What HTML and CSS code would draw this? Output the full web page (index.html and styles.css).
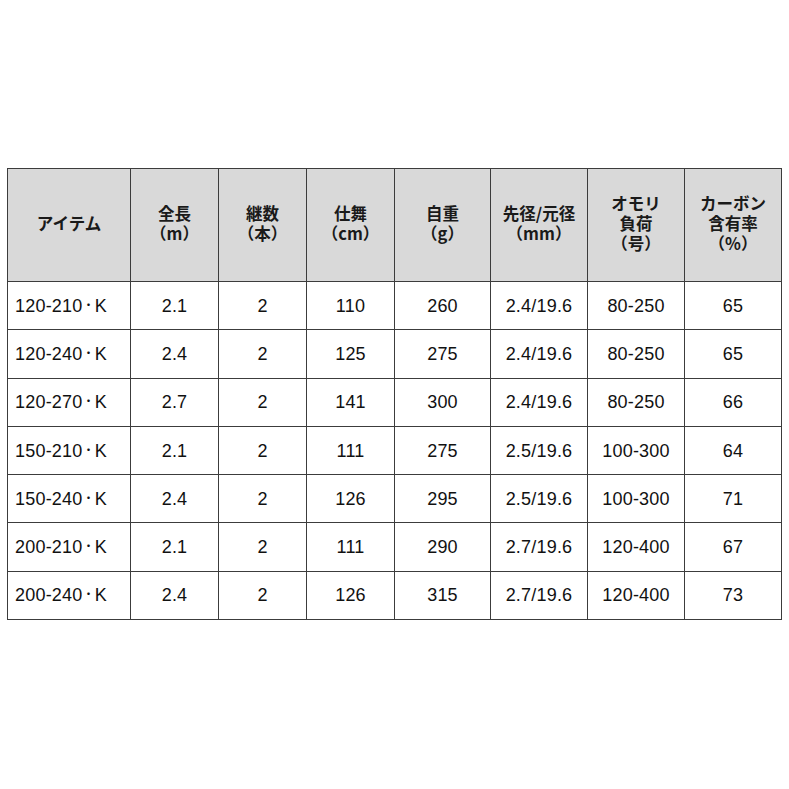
FILE: index.html
```html
<!DOCTYPE html>
<html lang="ja">
<head>
<meta charset="utf-8">
<link rel="stylesheet" href="styles.css">
</head>
<body>
<div class="page">
<table class="spec">
  <colgroup>
    <col class="c1"><col class="c2"><col class="c3"><col class="c4"><col class="c5"><col class="c6"><col class="c7"><col class="c8">
  </colgroup>
  <thead>
    <tr>
      <th>アイテム</th>
      <th>全長<br>（m）</th>
      <th>継数<br>（本）</th>
      <th>仕舞<br>（cm）</th>
      <th>自重<br>（g）</th>
      <th>先径/元径<br>（mm）</th>
      <th>オモリ<br>負荷<br>（号）</th>
      <th>カーボン<br>含有率<br>（%）</th>
    </tr>
  </thead>
  <tbody>
    <tr><td class="name">120-210<span class="dot">・</span>K</td><td>2.1</td><td>2</td><td>110</td><td>260</td><td>2.4/19.6</td><td>80-250</td><td>65</td></tr>
    <tr><td class="name">120-240<span class="dot">・</span>K</td><td>2.4</td><td>2</td><td>125</td><td>275</td><td>2.4/19.6</td><td>80-250</td><td>65</td></tr>
    <tr><td class="name">120-270<span class="dot">・</span>K</td><td>2.7</td><td>2</td><td>141</td><td>300</td><td>2.4/19.6</td><td>80-250</td><td>66</td></tr>
    <tr><td class="name">150-210<span class="dot">・</span>K</td><td>2.1</td><td>2</td><td>111</td><td>275</td><td>2.5/19.6</td><td>100-300</td><td>64</td></tr>
    <tr><td class="name">150-240<span class="dot">・</span>K</td><td>2.4</td><td>2</td><td>126</td><td>295</td><td>2.5/19.6</td><td>100-300</td><td>71</td></tr>
    <tr><td class="name">200-210<span class="dot">・</span>K</td><td>2.1</td><td>2</td><td>111</td><td>290</td><td>2.7/19.6</td><td>120-400</td><td>67</td></tr>
    <tr><td class="name">200-240<span class="dot">・</span>K</td><td>2.4</td><td>2</td><td>126</td><td>315</td><td>2.7/19.6</td><td>120-400</td><td>73</td></tr>
  </tbody>
</table>
</div>
</body>
</html>
```
FILE: styles.css
```css
html, body {
  margin: 0;
  padding: 0;
  background: #ffffff;
}
.page {
  padding: 168px 0 0 7px;
}
.spec {
  border-collapse: collapse;
  table-layout: fixed;
  width: 774px;
  color: #111;
}
.c1 { width: 123px; }
.c2 { width: 88px; }
.c3 { width: 88px; }
.c4 { width: 88px; }
.c5 { width: 96px; }
.c6 { width: 97px; }
.c7 { width: 97px; }
.c8 { width: 97px; }
.spec th, .spec td {
  border: 1px solid #3c3c3c;
  padding: 0;
  text-align: center;
  vertical-align: middle;
}
.spec th {
  background: #d9d9d9;
  height: 108px;
  padding-bottom: 4px;
  font-family: "Noto Sans CJK JP", "Noto Sans", sans-serif;
  font-weight: 700;
  font-size: 16.5px;
  line-height: 20px;
  color: #1a1a1a;
}
.spec td {
  height: 46.3px;
  padding-top: 1px;
  font-family: "Liberation Sans", Arial, "Noto Sans CJK JP", sans-serif;
  font-size: 18px;
  letter-spacing: 0.2px;
}
.spec td.name {
  text-align: left;
  padding-left: 7px;
}
.dot {
  font-family: "Noto Sans CJK JP", sans-serif;
  font-size: 12px;
  vertical-align: 2px;
}
```
